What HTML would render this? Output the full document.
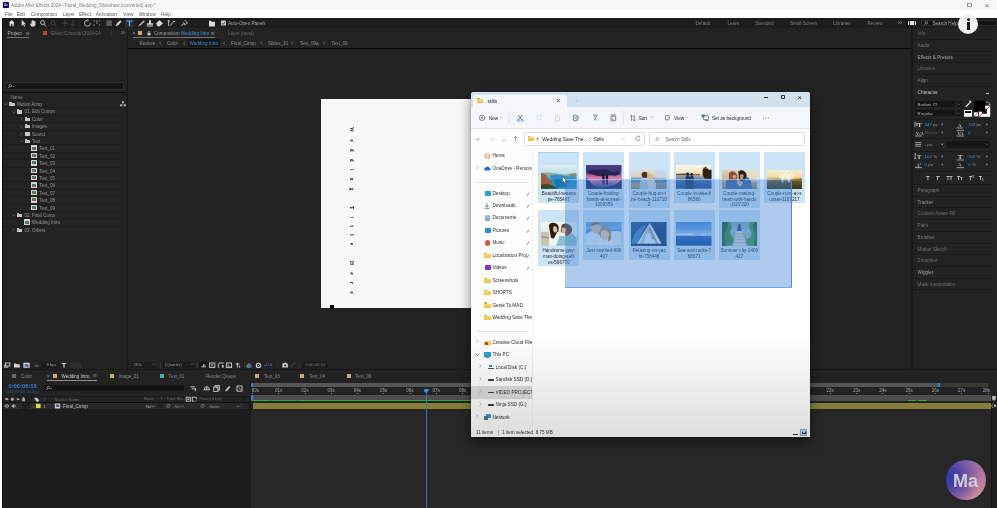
<!DOCTYPE html>
<html lang="en">
<head>
<meta charset="utf-8">
<title>Adobe After Effects 2024 - Floral_Wedding_Slideshow (converted).aep *</title>
<style>
html,body{margin:0;padding:0}
html{background:#181818}
body{width:997px;height:508px;overflow:hidden;position:relative;background:#181818;opacity:.9999;font-family:"Liberation Sans",sans-serif;color:#a8a8a8}
.a{position:absolute}
.t{position:absolute;white-space:nowrap;line-height:1;font-size:4.6px;color:#9a9a9a;margin-top:1.2px}
.d{color:#6a6a6a}
.b{color:#3f8fe6}
.pn{position:absolute;background:#232323}
.ln{position:absolute;background:#141414;height:1px}
svg{position:absolute;overflow:visible}
.cv,.cr,.cl{position:absolute;box-sizing:border-box;border-right:.55px solid #888;border-bottom:.55px solid #888}
.cv{transform:rotate(45deg)}.cr{transform:rotate(-45deg)}.cl{transform:rotate(135deg)}
/* project tree */
.fo{position:absolute;width:5.3px;height:3.3px;margin-top:.9px;background:#c9c9c9;border-radius:.5px}
.fo:before{content:"";position:absolute;left:0;top:-.8px;width:2.4px;height:1.2px;background:#c9c9c9;border-radius:.5px .5px 0 0}
.ci{position:absolute;width:6px;height:5.4px;background:#d6d6d6;border-radius:.6px}
.ci:before{content:"";position:absolute;left:1.2px;top:1.2px;width:3.6px;height:3px;background:linear-gradient(135deg,#2f6fc0 0 40%,#3a9a4a 40% 70%,#c0392b 70%)}
.ar{position:absolute;font-size:4px;color:#8a8a8a;line-height:1}
.rw{position:absolute;left:3px;width:117px;height:1px;background:#1d1d1d}
/* right panel */
.rp{position:absolute;left:913.4px;width:79.5px;height:1px;background:#1b1b1b}
.sq{position:absolute;width:4px;height:4px}
/* explorer */
.ex{font-family:"Liberation Sans",sans-serif;color:#1b1b1b}
.nv{position:absolute;left:493px;font-size:4.7px;line-height:1;white-space:nowrap;color:#222;overflow:hidden;max-width:39px;padding:2px 0 1px}
.ni{position:absolute;width:6px;height:5px;border-radius:.8px}
.pin{position:absolute;left:527px;font-size:3.6px;color:#777;line-height:1}
.tile{position:absolute;width:41px;background:#cce4f7}
.cap{position:absolute;left:0;width:41px;text-align:center;font-size:4.6px;line-height:5.9px;color:#2c2c2c;white-space:nowrap}
.th{position:absolute;left:3px;width:35.5px;overflow:hidden;filter:blur(.3px)}
</style>
</head>
<body>
<!-- ===== OS title bar + menu bar ===== -->
<div class="a" style="left:0;top:0;width:997px;height:9.5px;background:#f6f6f6"></div>
<div class="a" style="left:0;top:9.5px;width:997px;height:8.2px;background:#fefefe"></div>
<div class="a" style="left:3px;top:2.1px;width:6px;height:5.7px;background:#0d0a5c;border-radius:.8px"></div>
<div class="t" style="left:3.9px;top:2.6px;font-size:3.4px;color:#b9b4ff;font-weight:bold">Ae</div>
<div class="t" style="left:11px;top:3.1px;font-size:4.52px;color:#858585">Adobe After Effects 2024 - Floral_Wedding_Slideshow (converted).aep *</div>
<div class="t" style="left:5.0px;top:11.8px;font-size:4.75px;color:#5a5a5a">File</div><div class="t" style="left:16.8px;top:11.8px;font-size:4.75px;color:#5a5a5a">Edit</div><div class="t" style="left:30.7px;top:11.8px;font-size:4.75px;color:#5a5a5a">Composition</div><div class="t" style="left:62.8px;top:11.8px;font-size:4.75px;color:#5a5a5a">Layer</div><div class="t" style="left:78.9px;top:11.8px;font-size:4.75px;color:#5a5a5a">Effect</div><div class="t" style="left:95.7px;top:11.8px;font-size:4.75px;color:#5a5a5a">Animation</div><div class="t" style="left:123.3px;top:11.8px;font-size:4.75px;color:#5a5a5a">View</div><div class="t" style="left:138.7px;top:11.8px;font-size:4.75px;color:#5a5a5a">Window</div><div class="t" style="left:161.0px;top:11.8px;font-size:4.75px;color:#5a5a5a">Help</div>
<div class="a" style="left:967.4px;top:2.6px;width:4.4px;height:4.4px;border:.55px solid #9a9a9a;box-sizing:border-box"></div>
<div class="t" style="left:985px;top:1px;font-size:7px;color:#666">×</div>
<!-- ===== AE toolbar ===== -->
<div class="a" id="tb" style="left:0;top:17.7px;width:997px;height:10.3px;background:#1d1d1d"></div>
<svg style="left:0;top:17.7px" width="270" height="10.3" viewBox="0 0 270 10.3">
 <g fill="#d8d8d8" stroke="none">
  <path d="M11.7 2 L8.8 4.8 H9.6 V8.2 H11 V6.2 H12.4 V8.2 H13.8 V4.8 H14.6 Z"/>
  <path d="M21.600 1.800V8l1.500-1.400 1 2.200 1-.5-1-2.100h2z"/>
  <path d="M31.400 8.600L30 6.200q-.3-.9.600-.7l.800.8V3q.5-.7 1 0V2.200q.5-.7 1 0V3q.5-.7 1 0v.6q.5-.6 1 0V6.800q0 1.800-1.600 1.800z"/>
 </g>
 <circle cx="42.5" cy="4.6" r="2" fill="none" stroke="#d0d0d0" stroke-width=".9"/>
 <path d="M44 6.2 L46 8.4" stroke="#d0d0d0" stroke-width="1"/>
 <g stroke="#2f2f2f" stroke-width=".6"><path d="M19 1.5V9M49 1.5V9M80 1.5V9M104 1.5V9M136 1.5V9M166 1.5V9"/></g>
 <g stroke="#4a4a4a" fill="none" stroke-width=".9">
  <circle cx="53" cy="4.8" r="2"/><path d="M54.5 6.3 L56.3 8.3"/>
  <path d="M62 5.2H68M65 2.2V8.2"/>
  <path d="M73 2.2V8M71.3 6.3L73 8.2L74.7 6.3"/>
 </g>
 <g stroke="#bdbdbd" fill="none" stroke-width=".9">
  <path d="M90.5 5.2A3 3 0 1 1 87.5 2.2"/><path d="M87 1L88.6 2.3L87 3.6" stroke-width=".7"/>
 </g>
 <g fill="#8a8a8a"><rect x="93.5" y="2.5" width="1.3" height="1.3"/><rect x="96.2" y="2.5" width="1.3" height="1.3"/><rect x="98.9" y="2.5" width="1.3" height="1.3"/><rect x="93.5" y="6.5" width="1.3" height="1.3"/><rect x="96.2" y="4.5" width="1.3" height="1.3"/><rect x="98.9" y="6.5" width="1.3" height="1.3"/></g>
 <rect x="106.3" y="2.4" width="5.6" height="5.6" fill="#5e5e5e"/>
 <path d="M115.5 8.4 L117 5 L120.3 2.2 L121.6 3.6 L118.6 7 Z" fill="#cfcfcf"/>
 <rect x="125" y="0.8" width="9" height="9" fill="#2c2c2c"/>
 <path d="M126.6 2.4H132.4V3.7H130.2V8.3H128.8V3.7H126.6Z" fill="#4ea1ff"/>
 <path d="M138.3 8.4 L140 6 L144 2.2 L144.9 3.1 L141 7 Z" fill="#d6d6d6"/>
 <path d="M149 2.2h2v3h2.2v1.6h-6.4V5.2h2.2zM146.8 7.6h6.4v.9h-6.4z" fill="#d6d6d6"/>
 <path d="M156 5.6 L159.6 2 L163 5.4 L159.4 8.6 H157.6 Z" fill="#d6d6d6"/>
 <path d="M167.5 3h2.4M168.7 2v6M170.5 7.5L174 3l1 1.2" stroke="#cfcfcf" stroke-width=".9" fill="none"/>
 <path d="M184.6 2 L187.6 5 L186.2 5.4 L184.6 7 L183.4 5.8 L181.4 8 M183 4.2 L185.2 6.4" stroke="#cfcfcf" stroke-width=".9" fill="none"/>
 <path d="M209 2.8h2l.7.9h3.3v4.8h-6z" fill="#dcdcdc"/>
 <rect x="221" y="2.6" width="5" height="5" rx=".6" fill="#c9c9c9"/>
 <path d="M222 5.2l1.2 1.3 2-2.6" stroke="#222" stroke-width=".8" fill="none"/>
</svg>
<div class="t" style="left:228px;top:20.6px;font-size:4.6px;color:#a9a9a9">Auto-Open Panels</div>
<!-- workspace switcher -->
<div class="t" style="left:695.5px;top:20.6px;color:#808080">Default</div>
<div class="t" style="left:727.5px;top:20.6px;color:#808080">Learn</div>
<div class="t" style="left:755px;top:20.6px;color:#808080">Standard</div>
<div class="t" style="left:790px;top:20.6px;color:#808080">Small Screen</div>
<div class="t" style="left:833px;top:20.6px;color:#808080">Libraries</div>
<div class="t" style="left:867.5px;top:20.6px;color:#808080">Review</div>
<svg style="left:898.0px;top:21.0px" width="4.4" height="3.2" viewBox="0 0 4.4 3.2"><path d="M.3.2l1.400 1.400L.3 3M2.400.2l1.400 1.400L2.400 3" fill="none" stroke="#b4b4b4" stroke-width=".6"/></svg>
<div class="a" style="left:908.2px;top:21.2px;width:7.6px;height:3.7px;background:linear-gradient(90deg,#e0e0e0 0 12%,#444 12% 20%,#e0e0e0 20% 34%,#555 34% 42%,#e0e0e0 42% 58%,#666 58% 64%,#e0e0e0 64% 76%,#444 76% 84%,#e0e0e0 84%);border-radius:.4px"></div><div class="a" style="left:906.6px;top:19px;width:.6px;height:7.6px;background:#111"></div>
<div class="a" style="left:921px;top:20.1px;width:76px;height:5.7px;background:#131313;border:.5px solid #2c2c2c;box-sizing:border-box"></div>
<svg style="left:924.4px;top:20.6px" width="6.7" height="4.2" viewBox="0 0 8 5"><circle cx="2.8" cy="2" r="1.5" fill="none" stroke="#bdbdbd" stroke-width=".7"/><path d="M1.7 3.100L.4 4.600" stroke="#bdbdbd" stroke-width=".8"/></svg>
<div class="t" style="left:932.5px;top:20.6px;color:#b5b5b5">Search Help</div>
<!-- ===== Project panel ===== -->
<div class="pn" style="left:2.7px;top:28px;width:124.5px;height:341px"></div>
<div class="t" style="left:7.6px;top:30.9px;color:#b8b8b8">Project</div>
<svg style="left:25.6px;top:32.0px" width="3.4" height="3.2" viewBox="0 0 3.4 3.2"><path d="M0 .4h3.400M0 1.600h3.400M0 2.800h3.400" stroke="#a4a4a4" stroke-width=".45"/></svg>
<div class="a" style="left:7px;top:36.9px;width:22px;height:.7px;background:#707070"></div>
<div class="sq" style="left:43px;top:31.2px;width:3.8px;height:3.6px;background:#d03a3a"></div>
<div class="t d" style="left:51px;top:30.9px">Effect Controls (2024-04</div>
<svg style="left:120.8px;top:31.4px" width="4.4" height="3.2" viewBox="0 0 4.4 3.2"><path d="M.3.2l1.400 1.400L.3 3M2.400.2l1.400 1.400L2.400 3" fill="none" stroke="#b4b4b4" stroke-width=".6"/></svg>
<div class="a" style="left:5px;top:82.4px;width:119px;height:7.6px;background:#161616;border:.5px solid #2e2e2e;box-sizing:border-box"></div>
<svg style="left:8.0px;top:84.4px" width="6.7" height="4.2" viewBox="0 0 8 5"><circle cx="2.8" cy="2" r="1.5" fill="none" stroke="#c4c4c4" stroke-width=".7"/><path d="M1.7 3.100L.4 4.600" stroke="#c4c4c4" stroke-width=".8"/><path d="M5.200 2.600h2l-1 1.200z" fill="#c4c4c4"/></svg>
<div class="ln" style="left:2.7px;top:92px;width:123.6px;background:#0e0e0e"></div>
<div class="t d" style="left:10.5px;top:94.4px;color:#8a8a8a">Name</div>
<div class="a" style="left:120.5px;top:100.5px;width:6.7px;height:133px;background:#212121"></div>
<svg style="left:120px;top:101px" width="6" height="6" viewBox="0 0 6 6"><g fill="#c8c8c8"><rect x="2" y=".3" width="2" height="2"/><rect x=".3" y="3.3" width="2" height="2"/><rect x="3.7" y="3.3" width="2" height="2"/></g></svg>
<!-- project tree -->
<div class="rw" style="top:107.3px"></div>
<svg style="left:4.43px;top:103.45px" width="4.04" height="2.52" viewBox="0 0 4.04 2.52"><path d="M0.50 0.50L2.02 2.02L3.54 0.50" fill="none" stroke="#6c6c6c" stroke-width=".6"/></svg>
<div class="fo" style="left:9.3px;top:102.0px"></div>
<div class="t" style="left:17.0px;top:101.9px;color:#969696;font-size:4.5px">Motion Array</div>
<div class="rw" style="top:114.7px"></div>
<svg style="left:12.02px;top:110.84px" width="4.04" height="2.52" viewBox="0 0 4.04 2.52"><path d="M0.50 0.50L2.02 2.02L3.54 0.50" fill="none" stroke="#6c6c6c" stroke-width=".6"/></svg>
<div class="fo" style="left:16.9px;top:109.4px"></div>
<div class="t" style="left:24.5px;top:109.3px;color:#969696;font-size:4.5px">01. Edit Comps</div>
<div class="rw" style="top:122.1px"></div>
<svg style="left:20.04px;top:117.28px" width="2.47" height="3.94" viewBox="0 0 2.47 3.94"><path d="M0.50 0.50L1.97 1.97L0.50 3.44" fill="none" stroke="#6c6c6c" stroke-width=".6"/></svg>
<div class="fo" style="left:24.5px;top:116.8px"></div>
<div class="t" style="left:32.0px;top:116.7px;color:#969696;font-size:4.5px">Color</div>
<div class="rw" style="top:129.5px"></div>
<svg style="left:20.04px;top:124.68px" width="2.47" height="3.94" viewBox="0 0 2.47 3.94"><path d="M0.50 0.50L1.97 1.97L0.50 3.44" fill="none" stroke="#6c6c6c" stroke-width=".6"/></svg>
<div class="fo" style="left:24.5px;top:124.2px"></div>
<div class="t" style="left:32.0px;top:124.1px;color:#969696;font-size:4.5px">Images</div>
<div class="rw" style="top:136.9px"></div>
<svg style="left:20.04px;top:132.08px" width="2.47" height="3.94" viewBox="0 0 2.47 3.94"><path d="M0.50 0.50L1.97 1.97L0.50 3.44" fill="none" stroke="#6c6c6c" stroke-width=".6"/></svg>
<div class="fo" style="left:24.5px;top:131.6px"></div>
<div class="t" style="left:32.0px;top:131.5px;color:#969696;font-size:4.5px">Sound</div>
<div class="rw" style="top:144.3px"></div>
<svg style="left:19.63px;top:140.45px" width="4.04" height="2.52" viewBox="0 0 4.04 2.52"><path d="M0.50 0.50L2.02 2.02L3.54 0.50" fill="none" stroke="#6c6c6c" stroke-width=".6"/></svg>
<div class="fo" style="left:24.5px;top:139.0px"></div>
<div class="t" style="left:32.0px;top:138.9px;color:#969696;font-size:4.5px">Text</div>
<div class="rw" style="top:151.7px"></div>
<div class="ci" style="left:31.2px;top:145.4px"></div>
<div class="t" style="left:39.3px;top:146.3px;color:#969696;font-size:4.5px">Text_01</div>
<div class="rw" style="top:159.1px"></div>
<div class="ci" style="left:31.2px;top:152.8px"></div>
<div class="t" style="left:39.3px;top:153.7px;color:#969696;font-size:4.5px">Text_02</div>
<div class="rw" style="top:166.5px"></div>
<div class="ci" style="left:31.2px;top:160.2px"></div>
<div class="t" style="left:39.3px;top:161.1px;color:#969696;font-size:4.5px">Text_03</div>
<div class="rw" style="top:173.9px"></div>
<div class="ci" style="left:31.2px;top:167.6px"></div>
<div class="t" style="left:39.3px;top:168.5px;color:#969696;font-size:4.5px">Text_04</div>
<div class="rw" style="top:181.3px"></div>
<div class="ci" style="left:31.2px;top:175.0px"></div>
<div class="t" style="left:39.3px;top:175.9px;color:#969696;font-size:4.5px">Text_05</div>
<div class="rw" style="top:188.7px"></div>
<div class="ci" style="left:31.2px;top:182.4px"></div>
<div class="t" style="left:39.3px;top:183.3px;color:#969696;font-size:4.5px">Text_06</div>
<div class="rw" style="top:196.1px"></div>
<div class="ci" style="left:31.2px;top:189.8px"></div>
<div class="t" style="left:39.3px;top:190.7px;color:#969696;font-size:4.5px">Text_07</div>
<div class="rw" style="top:203.5px"></div>
<div class="ci" style="left:31.2px;top:197.2px"></div>
<div class="t" style="left:39.3px;top:198.1px;color:#969696;font-size:4.5px">Text_08</div>
<div class="rw" style="top:210.9px"></div>
<div class="ci" style="left:31.2px;top:204.6px"></div>
<div class="t" style="left:39.3px;top:205.5px;color:#969696;font-size:4.5px">Text_09</div>
<div class="rw" style="top:218.3px"></div>
<svg style="left:12.02px;top:214.45px" width="4.04" height="2.52" viewBox="0 0 4.04 2.52"><path d="M0.50 0.50L2.02 2.02L3.54 0.50" fill="none" stroke="#6c6c6c" stroke-width=".6"/></svg>
<div class="fo" style="left:16.9px;top:213.0px"></div>
<div class="t" style="left:24.5px;top:212.9px;color:#969696;font-size:4.5px">02. Final Comp</div>
<div class="rw" style="top:225.7px"></div>
<div class="ci" style="left:24.3px;top:219.4px"></div>
<div class="t" style="left:32.0px;top:220.3px;color:#969696;font-size:4.5px">Wedding Intro</div>
<div class="rw" style="top:233.1px"></div>
<svg style="left:12.45px;top:228.28px" width="2.47" height="3.94" viewBox="0 0 2.47 3.94"><path d="M0.50 0.50L1.97 1.97L0.50 3.44" fill="none" stroke="#6c6c6c" stroke-width=".6"/></svg>
<div class="fo" style="left:16.9px;top:227.8px"></div>
<div class="t" style="left:24.5px;top:227.7px;color:#969696;font-size:4.5px">03. Others</div>
<!-- project bottom bar -->
<svg style="left:3px;top:361px" width="90" height="8" viewBox="0 0 90 8">
 <g fill="none" stroke="#cfcfcf" stroke-width=".9"><rect x="2.4" y="2" width="4.4" height="3"/><path d="M1.3 3.6v2.6h4"/></g>
 <path d="M11 2.4h2l.6.8h3.2v3.4H11z" fill="#d6d6d6"/>
 <rect x="20.4" y="1.8" width="6.2" height="5" rx=".5" fill="#d6d6d6"/><rect x="21.6" y="3" width="3.8" height="2.8" fill="#3a7bd0"/><rect x="23.4" y="4.2" width="2" height="1.6" fill="#c0392b"/>
 <path d="M31 5.8l1.8-3 1 1.6 1-.9 1.2 2.3z" fill="#5a5a5a"/>
 <rect x="39.2" y="1.4" width="17" height="5.8" fill="#1b1b1b"/>
 <path d="M58.8 2h4.4v1h-1.6v3.6h-1.2V3h-1.6z" fill="#cfcfcf"/>
 <rect x="67" y="1.2" width="12" height="6" rx="3" fill="#2e2e2e"/>
</svg>
<div class="t" style="left:46.5px;top:362px;font-size:4.2px;color:#9c9c9c">8 bpc</div>
<div class="a" style="left:111.3px;top:29.6px;width:.6px;height:7.4px;background:#303030"></div>
<!-- ===== Composition panel ===== -->
<div class="pn" style="left:128.2px;top:28px;width:783.1px;height:341px"></div>
<div class="ln" style="left:128.2px;top:47.7px;width:783.1px;background:#080808"></div>
<div class="t" style="left:132.6px;top:30.6px;font-size:4.6px;color:#a0a0a0">×</div>
<div class="sq" style="left:138.4px;top:31px;background:#c9ad78"></div>
<svg style="left:146.6px;top:30.8px" width="4" height="4.8" viewBox="0 0 5 6"><path d="M1.2 2.6V1.8a1.3 1.3 0 0 1 2.6 0v.8" fill="none" stroke="#d0d0d0" stroke-width=".8"/><rect x=".6" y="2.6" width="3.8" height="2.8" fill="#d0d0d0"/></svg>
<div class="t" style="left:154px;top:30.9px;color:#9c9c9c">Composition <span class="b">Wedding Intro</span></div>
<svg style="left:211.0px;top:32.0px" width="3.4" height="3.2" viewBox="0 0 3.4 3.2"><path d="M0 .4h3.400M0 1.600h3.400M0 2.800h3.400" stroke="#a4a4a4" stroke-width=".45"/></svg>
<div class="a" style="left:132.5px;top:36.9px;width:82.5px;height:.7px;background:#707070"></div>
<div class="t d" style="left:228px;top:30.9px">Layer (none)</div>
<div class="t" style="left:139.5px;top:40.9px;color:#8e8e8e">Reduce</div>
<svg style="left:158.72px;top:41.02px" width="2.73" height="4.46" viewBox="0 0 2.73 4.46"><path d="M2.23 0.50L0.50 2.23L2.23 3.96" fill="none" stroke="#8a8a8a" stroke-width=".6"/></svg>
<div class="t" style="left:167px;top:40.9px;color:#8e8e8e">Color</div>
<svg style="left:183.22px;top:41.02px" width="2.73" height="4.46" viewBox="0 0 2.73 4.46"><path d="M2.23 0.50L0.50 2.23L2.23 3.96" fill="none" stroke="#8a8a8a" stroke-width=".6"/></svg>
<div class="a" style="left:187.5px;top:39.4px;width:32px;height:7.4px;background:#161616"></div>
<div class="t b" style="left:189.5px;top:40.9px">Wedding Intro</div>
<svg style="left:222.72px;top:41.02px" width="2.73" height="4.46" viewBox="0 0 2.73 4.46"><path d="M2.23 0.50L0.50 2.23L2.23 3.96" fill="none" stroke="#8a8a8a" stroke-width=".6"/></svg>
<div class="t" style="left:231px;top:40.9px;color:#8e8e8e">Final_Comp</div>
<svg style="left:259.71px;top:41.02px" width="2.73" height="4.46" viewBox="0 0 2.73 4.46"><path d="M2.23 0.50L0.50 2.23L2.23 3.96" fill="none" stroke="#8a8a8a" stroke-width=".6"/></svg>
<div class="t" style="left:268px;top:40.9px;color:#8e8e8e">Slides_10</div>
<svg style="left:291.21px;top:41.02px" width="2.73" height="4.46" viewBox="0 0 2.73 4.46"><path d="M2.23 0.50L0.50 2.23L2.23 3.96" fill="none" stroke="#8a8a8a" stroke-width=".6"/></svg>
<div class="t" style="left:300px;top:40.9px;color:#8e8e8e">Text_09a</div>
<svg style="left:323.21px;top:41.02px" width="2.73" height="4.46" viewBox="0 0 2.73 4.46"><path d="M2.23 0.50L0.50 2.23L2.23 3.96" fill="none" stroke="#8a8a8a" stroke-width=".6"/></svg>
<div class="t" style="left:331.5px;top:40.9px;color:#8e8e8e">Text_09</div>
<!-- comp canvas -->
<div class="a" style="left:320.8px;top:99.2px;width:372px;height:209px;background:#f8f8f8"></div>
<div class="a" style="left:330.3px;top:304.9px;width:3.7px;height:4px;background:#0a0a0a"></div>
<div class="a" id="vt" style="left:348.8px;top:127.3px;writing-mode:vertical-rl;font-family:'Liberation Serif',serif;font-size:5.2px;line-height:5.4px;letter-spacing:7.23px;color:#161616;white-space:nowrap;font-weight:bold">Wedding Title Here</div>
<!-- comp bottom bar -->
<div class="a" style="left:131px;top:361.8px;width:25px;height:5.8px;background:#1b1b1b"></div>
<div class="t" style="left:133.5px;top:362px;font-size:4.2px;color:#9c9c9c">25%</div>
<svg style="left:151.56px;top:363.20px" width="3.69" height="2.34" viewBox="0 0 3.69 2.34"><path d="M0.50 0.50L1.84 1.84L3.19 0.50" fill="none" stroke="#8a8a8a" stroke-width=".6"/></svg>
<div class="a" style="left:163px;top:361.8px;width:31px;height:5.8px;background:#1b1b1b"></div>
<div class="t" style="left:165px;top:362px;font-size:4.2px;color:#9c9c9c">(Quarter)</div>
<svg style="left:189.96px;top:363.20px" width="3.69" height="2.34" viewBox="0 0 3.69 2.34"><path d="M0.50 0.50L1.84 1.84L3.19 0.50" fill="none" stroke="#8a8a8a" stroke-width=".6"/></svg>
<svg style="left:198px;top:361px" width="135" height="8" viewBox="0 0 135 8">
 <g fill="none" stroke="#d0d0d0" stroke-width=".9">
  <rect x="1.4" y=".8" width="8" height="6.6" fill="#111" stroke="none"/><path d="M3.2 5.8h4.8M5.6 5.8V3.2l1.6 1.6"/>
  <rect x="11.6" y="2" width="5.2" height="4.4"/><path d="M13 3.2l2.4 2M15.4 3.2l-2.4 2" stroke-width=".6"/>
  <path d="M20.4 6.8V3.4q0-1.4 1.6-1.4h3.6"/><rect x="24" y="4" width="1.6" height="2.6" fill="#d0d0d0" stroke="none"/>
  <rect x="28.6" y="2" width="5" height="4.6"/><path d="M30 3.4v2h2.4" stroke-width=".6"/>
  <path d="M39.4 1.6v5M37.6 3h3.8M41.6 4.6v2.2" />
 </g>
 <circle cx="51" cy="3.6" r="1.7" fill="#d33"/><circle cx="50" cy="5.2" r="1.7" fill="#3a3"/><circle cx="52.2" cy="5.2" r="1.7" fill="#36c"/>
 <circle cx="60.4" cy="4.4" r="2.1" fill="none" stroke="#d6d6d6" stroke-width="1.1"/><circle cx="60.4" cy="4.4" r=".7" fill="#d6d6d6"/>
 <path d="M80 1.4v5.6M101.4 1.4v5.6" stroke="#3a3a3a" stroke-width=".6"/>
 <path d="M84.4 2.6h1.2l.5-.8h2l.5.8h1.2v3.8h-5.4z" fill="#d0d0d0"/><circle cx="87.1" cy="4.5" r="1" fill="#222"/>
 <path d="M93.6 5.6l2.4-2.4M95 2.8l1-1q1-.6 1.6.4l-1 1.4M94.4 6.4q-1 .6-1.6-.4l1-1.4" stroke="#4a4a4a" stroke-width=".8" fill="none"/>
 <rect x="104.6" y="1.2" width="25.4" height="5.8" fill="#1d1d1d"/>
</svg>
<div class="a" style="left:159.8px;top:361.6px;width:.6px;height:6px;background:#363636"></div><div class="a" style="left:197.0px;top:361.6px;width:.6px;height:6px;background:#363636"></div><div class="a" style="left:243.6px;top:361.6px;width:.6px;height:6px;background:#363636"></div>
<div class="t b" style="left:263.8px;top:362px;font-size:4.2px">+0.0</div>
<div class="t d" style="left:305.5px;top:362px;font-size:4.2px;color:#777">0:00:06:15</div>
<!-- ===== Right panel stack ===== -->
<div class="pn" style="left:912.8px;top:28px;width:84.2px;height:341px"></div>
<div class="t d" style="left:917.6px;top:30.9px;color:#6e6e6e">Info</div>
<div class="rp" style="top:39px"></div>
<div class="t d" style="left:917.6px;top:42.9px;color:#7c7c7c">Audio</div>
<div class="rp" style="top:50.8px"></div>
<div class="t" style="left:917.6px;top:54.6px;color:#a6a6a6">Effects &amp; Presets</div>
<div class="rp" style="top:62.4px"></div>
<div class="t d" style="left:917.6px;top:66.1px;color:#6a6a6a">Libraries</div>
<div class="rp" style="top:74px"></div>
<div class="t d" style="left:917.6px;top:77.6px;color:#7c7c7c">Align</div>
<div class="rp" style="top:85.7px"></div>
<div class="t" style="left:917.6px;top:89.6px;color:#c4c4c4">Character</div>
<div class="a" style="left:985.5px;top:93.2px;width:3.2px;height:.8px;background:#c8c8c8"></div>
<!-- character panel -->
<div class="a" style="left:915.3px;top:101px;width:40px;height:6.4px;background:#151515"></div>
<div class="t" style="left:917.6px;top:102.1px;color:#b0b0b0;font-size:4.4px">Bodoni 72</div>
<div class="a" style="left:956.6px;top:101px;width:5.4px;height:6.4px;background:#151515"></div>
<svg style="left:957.26px;top:103.00px" width="3.69" height="2.34" viewBox="0 0 3.69 2.34"><path d="M0.50 0.50L1.84 1.84L3.19 0.50" fill="none" stroke="#7c7c7c" stroke-width=".6"/></svg>
<div class="a" style="left:915.3px;top:109.8px;width:40px;height:6.4px;background:#151515"></div>
<div class="t" style="left:917.6px;top:110.9px;color:#b0b0b0;font-size:4.4px">Regular</div>
<div class="a" style="left:956.6px;top:109.8px;width:5.4px;height:6.4px;background:#151515"></div>
<svg style="left:957.26px;top:111.80px" width="3.69" height="2.34" viewBox="0 0 3.69 2.34"><path d="M0.50 0.50L1.84 1.84L3.19 0.50" fill="none" stroke="#7c7c7c" stroke-width=".6"/></svg>
<svg style="left:963px;top:99px" width="30" height="20" viewBox="0 0 30 20">
 <path d="M2.300 8.300l.5-1.500 3.300-3.300 1 1-3.300 3.300z" fill="#d4d4d4"/><path d="M6 2.800l1.400 1.400.8-.8q.4-.9-.3-1.500t-1.400-.1z" fill="#e4e4e4"/>
 <rect x="1.100" y="11" width="8" height="6.800" fill="#f4f4f4"/><rect x="2" y="12.100" width="6.200" height="1.900" fill="#0a0a0a"/>
 <rect x="15.900" y="6.700" width="11.300" height="11.100" fill="#fdfdfd"/>
 <rect x="19" y="9.800" width="4.900" height="4.900" fill="#0c0c0c"/>
 <path d="M15.900 17.800L27.200 6.700" stroke="#a8121f" stroke-width=".85"/>
 <rect x="10.900" y="1.700" width="11.300" height="10.900" fill="#000"/>
 <path d="M23.200 3.200h2q1.400 0 1.400 1.400v1.200M25.700 5l.9 1 .9-1" stroke="#d8d8d8" stroke-width=".6" fill="none"/>
 <rect x="10.900" y="13.300" width="4.200" height="4" fill="#f4f4f4"/><path d="M11 17.200l4-3.800" stroke="#b8202c" stroke-width=".55"/>
</svg>
<div class="rp" style="top:118.9px"></div>
<svg style="left:914px;top:120px" width="78" height="62" viewBox="0 0 78 62">
 <g fill="#cfcfcf" font-family="Liberation Serif,serif" font-weight="bold">
  <text x="1.6" y="6.4" font-size="4.4">T</text><text x="3.6" y="6.6" font-size="6.4">T</text>
  <text x="44" y="7" font-size="4.6" fill="#bdbdbd">A</text>
  <text x="2" y="15" font-size="4.4" fill="#bdbdbd">V/A</text>
  <text x="43.6" y="15" font-size="4.4" fill="#bdbdbd">VA</text>
  <text x="3" y="38.6" font-size="6.4">T</text>
  <text x="44" y="38.8" font-size="6.6">T</text>
  <text x="2.6" y="46.8" font-size="4.4" fill="#bdbdbd">Aª</text>
  <text x="44" y="46.4" font-size="4.4" fill="#bdbdbd">A</text>
 </g>
 <g stroke="#cfcfcf" stroke-width=".7" fill="none">
  <path d="M1 1.600v5.600M42.600 8h6.400"/>
  <path d="M1 16h7M42.6 16h7.4M42.6 10.6h7.4"/>
  <path d="M1.2 33.4v5.6M.4 34.2l.8-.8.8.8M.4 38.2l.8.8.8-.8"/>
  <path d="M42.6 40h7.4"/>
  <path d="M1 47.6h7M42.6 47.6h7.4"/>
  <path d="M1.2 22.6h6M1.2 24.4h6M1.2 26.2h6"/>
 </g>
 <g fill="#9a9a9a" font-size="3">
  <path d="M27.0 3.8h2.400l-1.200 1.600z"/><path d="M71.6 3.8h2.400l-1.200 1.600z"/><path d="M27.0 11.8h2.400l-1.200 1.600z"/><path d="M71.6 11.8h2.400l-1.200 1.600z"/>
  <path d="M27.0 23.8h2.400l-1.200 1.600z"/><path d="M27.0 35.8h2.400l-1.200 1.600z"/><path d="M71.6 35.8h2.400l-1.200 1.600z"/><path d="M27.0 43.8h2.400l-1.200 1.600z"/><path d="M71.6 43.8h2.400l-1.200 1.600z"/>
 </g>
 <g fill="#d4d4d4" font-family="Liberation Sans,sans-serif" font-weight="bold" font-size="5.4">
  <text x="12.2" y="60">T</text><text x="22" y="60" font-style="italic">T</text><text x="32.4" y="60" font-size="5">TT</text><text x="43" y="60">T<tspan font-size="4">T</tspan></text><text x="55" y="60">T<tspan font-size="3" dy="-2">1</tspan></text><text x="64.8" y="60">T<tspan font-size="3" dy="1">1</tspan></text>
 </g>
</svg>
<div class="t b" style="left:924.6px;top:121.4px;font-size:4.4px">347 <span style="color:#9a9a9a">px</span></div>
<div class="t b" style="left:968px;top:121.4px;font-size:4.4px">159 <span style="color:#9a9a9a">px</span></div>
<div class="t d" style="left:924.6px;top:129.6px;font-size:4.2px;color:#5e5e5e">Metrics</div>
<div class="t b" style="left:968px;top:129.6px;font-size:4.4px">0</div>
<div class="rp" style="top:137.6px"></div>
<div class="t b" style="left:924.6px;top:141.8px;font-size:4.4px">- <span style="color:#9a9a9a">px</span></div>
<div class="a" style="left:946.7px;top:141.4px;width:43.5px;height:6.4px;background:#161616"></div>
<svg style="left:984.96px;top:143.40px" width="3.69" height="2.34" viewBox="0 0 3.69 2.34"><path d="M0.50 0.50L1.84 1.84L3.19 0.50" fill="none" stroke="#7c7c7c" stroke-width=".6"/></svg>
<div class="rp" style="top:151px"></div>
<div class="t b" style="left:924.6px;top:153.6px;font-size:4.4px">100 <span style="color:#9a9a9a">%</span></div>
<div class="t b" style="left:968px;top:153.6px;font-size:4.4px">100 <span style="color:#9a9a9a">%</span></div>
<div class="t b" style="left:924.6px;top:161.4px;font-size:4.4px">0 <span style="color:#9a9a9a">px</span></div>
<div class="t b" style="left:968px;top:161.4px;font-size:4.4px">0 <span style="color:#9a9a9a">%</span></div>
<div class="rp" style="top:171.4px"></div>
<div class="rp" style="top:184.4px"></div>
<div class="t d" style="left:917.6px;top:187.9px;color:#7a7a7a">Paragraph</div>
<div class="rp" style="top:196px"></div>
<div class="t" style="left:917.6px;top:199.6px;color:#9a9a9a">Tracker</div>
<div class="rp" style="top:207.4px"></div>
<div class="t d" style="left:917.6px;top:211.2px;color:#707070">Content-Aware Fill</div>
<div class="rp" style="top:219.2px"></div>
<div class="t d" style="left:917.6px;top:223px;color:#707070">Paint</div>
<div class="rp" style="top:230.9px"></div>
<div class="t d" style="left:917.6px;top:234.7px;color:#808080">Brushes</div>
<div class="rp" style="top:242.6px"></div>
<div class="t d" style="left:917.6px;top:246.4px;color:#707070">Motion Sketch</div>
<div class="rp" style="top:254.3px"></div>
<div class="t d" style="left:917.6px;top:258.1px;color:#707070">Smoother</div>
<div class="rp" style="top:266px"></div>
<div class="t" style="left:917.6px;top:269.8px;color:#a8a8a8">Wiggler</div>
<div class="rp" style="top:277.7px"></div>
<div class="t d" style="left:917.6px;top:281.5px;color:#707070">Mask Interpolation</div>
<div class="rp" style="top:289.4px"></div>
<!-- ===== Timeline panel ===== -->
<div class="pn" style="left:3px;top:370px;width:994px;height:138px"></div><div class="a" style="left:3px;top:409.6px;width:247px;height:98.4px;background:#1d1d1d"></div><div class="a" style="left:251px;top:409.6px;width:740px;height:98.4px;background:#272727"></div><div class="a" style="left:990.8px;top:402px;width:6.2px;height:106px;background:#1f1f1f"></div><div class="a" style="left:990.8px;top:402px;width:.8px;height:106px;background:#171717"></div>
<div class="sq" style="left:12.2px;top:373.8px;background:#6c6c6c"></div>
<div class="t d" style="left:21px;top:373.9px;color:#8a8a8a">Color</div>
<div class="t" style="left:47px;top:373.7px;color:#a0a0a0">×</div>
<div class="sq" style="left:52.8px;top:373.8px;background:#c9ad78"></div>
<div class="t" style="left:61.6px;top:373.9px;color:#d2d2d2;font-size:4.5px">Wedding Intro</div>
<svg style="left:93.4px;top:374.4px" width="3.4" height="3.2" viewBox="0 0 3.4 3.2"><path d="M0 .4h3.400M0 1.600h3.400M0 2.800h3.400" stroke="#a4a4a4" stroke-width=".45"/></svg>
<div class="a" style="left:47.4px;top:380px;width:49.6px;height:.7px;background:#8e8e8e"></div>
<div class="sq" style="left:110.4px;top:373.8px;background:#c9ad78"></div>
<div class="t d" style="left:118.5px;top:373.9px;color:#8a8a8a">Image_01</div>
<div class="sq" style="left:159.5px;top:373.8px;background:#2fb3b3"></div>
<div class="t d" style="left:168.3px;top:373.9px;color:#8a8a8a">Text_01</div>
<div class="t d" style="left:206px;top:373.9px;color:#8a8a8a">Render Queue</div>
<div class="sq" style="left:255px;top:373.8px;background:#c9ad78"></div>
<div class="t d" style="left:263.8px;top:373.9px;color:#8a8a8a">Text_03</div>
<div class="sq" style="left:300.2px;top:373.8px;background:#c9ad78"></div>
<div class="t d" style="left:309px;top:373.9px;color:#8a8a8a">Text_04</div>
<div class="sq" style="left:346.6px;top:373.8px;background:#c9ad78"></div>
<div class="t d" style="left:355.3px;top:373.9px;color:#8a8a8a">Text_09</div>
<!-- timecode + search -->
<div class="t b" style="left:8.4px;top:382.6px;font-size:5.8px;font-weight:bold;color:#2f86e8">0:00:06:15</div>
<div class="t" style="left:6.6px;top:388.4px;font-size:4.2px;color:#2a5a9a">00159 (24.00 fps)</div>
<div class="a" style="left:44px;top:385px;width:140px;height:5.8px;background:#151515"></div>
<svg style="left:46.4px;top:385.8px" width="6.7" height="4.2" viewBox="0 0 8 5"><circle cx="2.8" cy="2" r="1.5" fill="none" stroke="#c4c4c4" stroke-width=".7"/><path d="M1.7 3.100L.4 4.600" stroke="#c4c4c4" stroke-width=".8"/><path d="M5.200 2.600h2l-1 1.200z" fill="#c4c4c4"/></svg>
<svg style="left:188px;top:383.6px" width="58" height="9" viewBox="0 0 58 9">
 <g fill="none" stroke="#d0d0d0" stroke-width=".9">
  <path d="M2.4 2.8h4.4M3.6 4.8h4.8M7.4 4.8v2.4"/>
  <path d="M15.4 5.8h6.6M16.4 5.6q0-3 2.4-3t2.4 3M18.8 2.6v3"/>
  <rect x="27.2" y="1.6" width="4.2" height="4.4"/><rect x="25.8" y="3" width="4.2" height="4.4" fill="#232323"/><rect x="28.4" y="2.8" width="1.6" height="1.6" fill="#d0d0d0" stroke="none"/>
  <path d="M37 6.4l3.4-3.8q1.4-.8 2 .6l-3.4 3.8q-1.4.8-2-.6z" fill="#bdbdbd" stroke="none"/>
  <rect x="49" y="2" width="5" height="5.2"/><path d="M50.4 3.4l2.6 2.8" stroke-width=".7"/>
 </g>
</svg>
<!-- column header row -->
<div class="ln" style="left:2.7px;top:395.6px;width:247.6px;background:#1b1b1b"></div>
<svg style="left:3px;top:396px" width="245" height="6.4" viewBox="0 0 245 6.4">
 <g fill="#a8a8a8">
  <ellipse cx="3.6" cy="3.2" rx="1.8" ry="1.1"/><circle cx="9.2" cy="3.2" r="1.6"/><rect x="13.6" y="2.4" width="2.6" height="1.6"/>
  <path d="M19.4 2.8v-.8a1 1 0 0 1 2 0v.8h.5v2.4h-3V2.8z"/>
  <path d="M31.2 1.8h2.6l2.4 2.4-2 2-2.4-2.4z" fill="#c8c8c8"/>
  <rect x="183.2" y="1.2" width="4.6" height="4" fill="none" stroke="#d0d0d0" stroke-width=".8"/><rect x="184.6" y="2.4" width="1.8" height="1.6" fill="#d0d0d0"/>
  <rect x="189.4" y="1.2" width="4" height="4" fill="none" stroke="#d0d0d0" stroke-width=".8"/><rect x="191.4" y="3.2" width="2.4" height="2.4" fill="#232323"/>
 </g>
 <path d="M147.5 1v4.6M240.6 1v4.6" stroke="#111" stroke-width=".7"/>
</svg>
<div class="t d" style="left:43.2px;top:396.6px;font-size:4px;color:#8a8a8a">#</div>
<div class="t d" style="left:54.8px;top:396.6px;font-size:4px;color:#6c6c6c">Source Name</div>
<div class="t d" style="left:144px;top:396.6px;font-size:3.8px;color:#6c6c6c">Mode</div>
<div class="t d" style="left:160.5px;top:396.6px;font-size:3.8px;color:#6c6c6c">T</div>
<div class="t d" style="left:166.3px;top:396.6px;font-size:3.8px;color:#6c6c6c">Track Ma...</div>
<div class="t d" style="left:199.5px;top:396.6px;font-size:3.8px;color:#6c6c6c">Parent &amp; Link</div>
<div class="ln" style="left:2.7px;top:402px;width:247.6px;background:#111"></div>
<!-- layer row -->
<div class="a" style="left:2.7px;top:403px;width:241px;height:6px;background:#2a2a2a"></div>
<div class="a" style="left:21.7px;top:403px;width:8.2px;height:6px;background:#1f1f1f"></div>
<svg style="left:3px;top:403px" width="245" height="6" viewBox="0 0 245 6">
 <ellipse cx="3.8" cy="3" rx="2" ry="1.3" fill="none" stroke="#c8c8c8" stroke-width=".7"/><circle cx="3.8" cy="3" r=".6" fill="#c8c8c8"/>
 <path d="M9 2.2h1l1.2-1v3.6l-1.2-1H9zM12 2q.8 1 0 2" fill="#c0c0c0" stroke="#c0c0c0" stroke-width=".4"/>
 <rect x="32.9" y=".7" width="4.7" height="4.4" fill="#e4d44c"/>
 <rect x="51.8" y=".4" width="5.4" height="5" rx=".6" fill="#cfcfcf"/><rect x="52.8" y="1.4" width="3.4" height="2.6" fill="#2f6fc0"/><rect x="54.2" y="2.4" width="2" height="1.6" fill="#b9382c"/>
 <rect x="155" y=".6" width="5" height="4.8" fill="#1f1f1f"/>
 <circle cx="165.2" cy="3" r="1.6" fill="none" stroke="#8a8a8a" stroke-width=".6"/><path d="M165.2 3l1.8-1.6" stroke="#8a8a8a" stroke-width=".5"/>
 <circle cx="199.4" cy="3" r="1.6" fill="none" stroke="#8a8a8a" stroke-width=".6"/><path d="M199.4 3l1.8-1.6" stroke="#8a8a8a" stroke-width=".5"/>
</svg>
<svg style="left:32.00px;top:404.50px" width="2.36" height="3.71" viewBox="0 0 2.36 3.71"><path d="M0.50 0.50L1.86 1.86L0.50 3.21" fill="none" stroke="#8a8a8a" stroke-width=".6"/></svg>
<div class="t" style="left:43.6px;top:403.4px;font-size:4.4px;color:#b8b8b8">1</div>
<div class="t" style="left:63px;top:403.4px;font-size:4.6px;color:#c0c0c0;letter-spacing:0">Final_Comp</div>
<div class="t" style="left:146px;top:403.4px;font-size:4.2px;color:#b0b0b0">No</div><svg style="left:151.35px;top:405.40px" width="4.31" height="2.65" viewBox="0 0 4.31 2.65"><path d="M0.50 0.50L2.15 2.15L3.81 0.50" fill="none" stroke="#9a9a9a" stroke-width=".6"/></svg>
<div class="t" style="left:174.4px;top:403.4px;font-size:4.2px;color:#8a8a8a">No</div><svg style="left:179.75px;top:405.40px" width="4.31" height="2.65" viewBox="0 0 4.31 2.65"><path d="M0.50 0.50L2.15 2.15L3.81 0.50" fill="none" stroke="#8a8a8a" stroke-width=".6"/></svg>
<div class="t" style="left:209.6px;top:403.4px;font-size:4.2px;color:#9a9a9a">None</div>
<svg style="left:235.59px;top:404.56px" width="4.12" height="2.56" viewBox="0 0 4.12 2.56"><path d="M0.50 0.50L2.06 2.06L3.62 0.50" fill="none" stroke="#8a8a8a" stroke-width=".6"/></svg>
<div class="ln" style="left:2.7px;top:409.4px;width:247.6px;background:#1b1b1b"></div>
<!-- time graph -->
<div class="a" style="left:250px;top:381.6px;width:.8px;height:126.4px;background:#161616"></div>
<div class="a" style="left:251.6px;top:383.2px;width:688px;height:3.4px;background:#565656"></div>
<div class="a" style="left:939.6px;top:383.2px;width:48.4px;height:3.4px;background:#3a3a34"></div>
<div class="a" style="left:250.6px;top:383.2px;width:2px;height:3.6px;background:#2f86e8;border-radius:1px 0 0 1px"></div>
<div class="a" style="left:938px;top:383.2px;width:2px;height:3.6px;background:#2f86e8"></div>
<div class="a" style="left:414px;top:384.8px;width:1.4px;height:1.2px;background:#4a7fc0"></div>
<div class="a" style="left:251.6px;top:395.4px;width:739px;height:5.2px;background:#4e4e4e"></div>
<div class="a" style="left:250.6px;top:395.2px;width:2px;height:5.6px;background:#2f86e8;border-radius:1px 0 0 1px"></div>
<div class="a" style="left:251.6px;top:400.2px;width:240px;height:1px;background:#2fae3a"></div>
<div class="a" style="left:907.7px;top:400.2px;width:8.8px;height:1px;background:#2fae3a"></div>
<div class="a" style="left:918.4px;top:400.2px;width:8.8px;height:1px;background:#2fae3a"></div>
<div class="a" style="left:270px;top:400px;width:1px;height:1.2px;background:#2b4fb0"></div>
<div class="a" style="left:296.6px;top:400px;width:1px;height:1.2px;background:#2b4fb0"></div>
<div class="a" style="left:252.6px;top:402.7px;width:738px;height:6.4px;background:#877e3b"></div>
<div class="a" style="left:992px;top:396px;width:3.8px;height:5px;background:#b4b4b4;clip-path:polygon(0 0,100% 0,100% 62%,50% 100%,0 62%)"></div>
<svg style="left:991px;top:403.2px" width="5.4" height="5.6" viewBox="0 0 5.400 5.600"><path d="M2.300.6L.5 2.800l1.800 2.200" fill="none" stroke="#e0e0e0" stroke-width=".6"/><path d="M2.800 2.800l1.300-1.600 1.300 1.600-1.300 1.600z" fill="#d0d0d0"/></svg>

<div class="a" style="left:252.0px;top:392.6px;width:.7px;height:1.8px;background:#8a8a8a"></div>
<div class="t" style="left:251.7px;top:388.1px;font-size:4.5px;color:#a8a8a8">00s</div>
<div class="a" style="left:278.2px;top:392.6px;width:.7px;height:1.8px;background:#8a8a8a"></div>
<div class="t" style="left:275.0px;top:388.1px;font-size:4.5px;color:#a8a8a8">01s</div>
<div class="a" style="left:304.5px;top:392.6px;width:.7px;height:1.8px;background:#8a8a8a"></div>
<div class="t" style="left:301.2px;top:388.1px;font-size:4.5px;color:#a8a8a8">02s</div>
<div class="a" style="left:330.8px;top:392.6px;width:.7px;height:1.8px;background:#8a8a8a"></div>
<div class="t" style="left:327.5px;top:388.1px;font-size:4.5px;color:#a8a8a8">03s</div>
<div class="a" style="left:357.0px;top:392.6px;width:.7px;height:1.8px;background:#8a8a8a"></div>
<div class="t" style="left:353.8px;top:388.1px;font-size:4.5px;color:#a8a8a8">04s</div>
<div class="a" style="left:383.3px;top:392.6px;width:.7px;height:1.8px;background:#8a8a8a"></div>
<div class="t" style="left:380.0px;top:388.1px;font-size:4.5px;color:#a8a8a8">05s</div>
<div class="a" style="left:409.6px;top:392.6px;width:.7px;height:1.8px;background:#8a8a8a"></div>
<div class="t" style="left:406.3px;top:388.1px;font-size:4.5px;color:#a8a8a8">06s</div>
<div class="a" style="left:435.8px;top:392.6px;width:.7px;height:1.8px;background:#8a8a8a"></div>
<div class="t" style="left:432.6px;top:388.1px;font-size:4.5px;color:#a8a8a8">07s</div>
<div class="a" style="left:462.1px;top:392.6px;width:.7px;height:1.8px;background:#8a8a8a"></div>
<div class="t" style="left:458.9px;top:388.1px;font-size:4.5px;color:#a8a8a8">08s</div>
<div class="a" style="left:829.9px;top:392.6px;width:.7px;height:1.8px;background:#8a8a8a"></div>
<div class="t" style="left:826.6px;top:388.1px;font-size:4.5px;color:#a8a8a8">22s</div>
<div class="a" style="left:856.2px;top:392.6px;width:.7px;height:1.8px;background:#8a8a8a"></div>
<div class="t" style="left:852.9px;top:388.1px;font-size:4.5px;color:#a8a8a8">23s</div>
<div class="a" style="left:882.4px;top:392.6px;width:.7px;height:1.8px;background:#8a8a8a"></div>
<div class="t" style="left:879.2px;top:388.1px;font-size:4.5px;color:#a8a8a8">24s</div>
<div class="a" style="left:908.7px;top:392.6px;width:.7px;height:1.8px;background:#8a8a8a"></div>
<div class="t" style="left:905.4px;top:388.1px;font-size:4.5px;color:#a8a8a8">25s</div>
<div class="a" style="left:935.0px;top:392.6px;width:.7px;height:1.8px;background:#8a8a8a"></div>
<div class="t" style="left:931.7px;top:388.1px;font-size:4.5px;color:#a8a8a8">26s</div>
<div class="a" style="left:961.2px;top:392.6px;width:.7px;height:1.8px;background:#8a8a8a"></div>
<div class="t" style="left:958.0px;top:388.1px;font-size:4.5px;color:#a8a8a8">27s</div>
<div class="a" style="left:987.5px;top:392.6px;width:.7px;height:1.8px;background:#8a8a8a"></div>
<div class="t" style="left:982.7px;top:388.1px;font-size:4.5px;color:#a8a8a8">28s</div>
<div class="a" style="left:425.6px;top:392px;width:.9px;height:116px;background:#3a72b6"></div>
<div class="a" style="left:423.6px;top:388.6px;width:5px;height:4.4px;background:#3b8ef0;border-radius:.8px;clip-path:polygon(0 0,100% 0,100% 55%,50% 100%,0 55%)"></div>
<!-- ===== Windows Explorer window ===== -->
<div class="a ex" id="exw" style="left:471px;top:92px;width:338.8px;height:345.3px;background:#fff;border-radius:2.6px 2.6px 0 0;overflow:hidden;box-shadow:0 5px 14px rgba(0,0,0,.42),0 1px 3px rgba(0,0,0,.3)"></div>
<div class="a" style="left:471px;top:92px;width:338.8px;height:14.6px;background:#cfe0ef;border-radius:2.6px 2.6px 0 0"></div>
<div class="a" style="left:473px;top:95px;width:94px;height:11.6px;background:#f3f6fb;border-radius:2.4px 2.4px 0 0"></div>
<div class="a" style="left:471px;top:106.6px;width:338.8px;height:21.4px;background:#f3f6fb"></div>
<div class="a" style="left:471px;top:128px;width:338.8px;height:.7px;background:#dfe3e8"></div>
<div class="a" style="left:471px;top:128.7px;width:338.8px;height:298px;background:#fff"></div>
<div class="a" style="left:471px;top:148.4px;width:61px;height:278.4px;background:#fefefe"></div><div class="a" style="left:532px;top:148.4px;width:.8px;height:278.4px;background:#f1f1f2"></div>
<div class="a" style="left:471px;top:426.8px;width:338.8px;height:10.5px;background:#fff"></div>
<!-- tab -->
<div class="a" style="left:477px;top:98.90px;width:6.4px;height:4.10px;background:linear-gradient(#f9d463,#f3c344);border-radius:.6px"></div><div class="a" style="left:477px;top:97.6px;width:2.8px;height:1.4px;background:#e0a820;border-radius:.5px .5px 0 0"></div>
<div class="t" style="left:487.5px;top:97.6px;font-size:5px;color:#1b1b1b">stills</div>
<div class="t" style="left:556.5px;top:96.6px;font-size:6.4px;color:#333">×</div>
<div class="t" style="left:575px;top:97px;font-size:5.6px;color:#a9bccb">+</div>
<div class="a" style="left:763.7px;top:96.8px;width:4.4px;height:.8px;background:#222"></div>
<div class="a" style="left:780.8px;top:95.2px;width:4.2px;height:4.2px;border:.55px solid #333;border-radius:.9px;box-sizing:border-box"></div>
<div class="t" style="left:797.6px;top:93px;font-size:7.4px;color:#222">×</div>
<!-- command bar -->
<svg style="left:471px;top:106.6px" width="339" height="21.4" viewBox="0 0 339 21.4">
 <circle cx="11" cy="10.8" r="2.7" fill="none" stroke="#444" stroke-width=".6"/><path d="M9.600 10.800h2.800M11 9.400v2.800" stroke="#444" stroke-width=".5"/>
 <path d="M38.200 4v14M152.500 4v14" stroke="#d3d8de" stroke-width=".6"/>
 <g fill="none" stroke-width=".7">
  <path d="M47.200 8l3.400 4.600M51.200 8l-3.400 4.600" stroke="#444"/><circle cx="47.200" cy="13.400" r="1" stroke="#2b7bd6"/><circle cx="51.200" cy="13.400" r="1" stroke="#2b7bd6"/>
  <rect x="66.200" y="8.400" width="3.600" height="4.400" stroke="#a9cbea" stroke-dasharray=".9 .6"/>
  <path d="M84.400 8.600h3l1.200 1.200V14h-4.200z" stroke="#c4cad2"/>
  <rect x="102.400" y="8.200" width="3.600" height="5.600" rx=".6" stroke="#555"/><path d="M104.200 9.800v2.400" stroke="#2b7bd6"/><path d="M106.800 8.600q1.400 1.600 0 5" stroke="#2b7bd6"/>
  <path d="M123 9l2.600 4.400M125.600 9l-2.600 4.400" stroke="#2b7bd6"/><path d="M122 8.200h4.600" stroke="#555"/>
  <rect x="140" y="9.200" width="4.600" height="4.600" rx=".6" stroke="#555"/><path d="M139.600 8h5.400" stroke="#555"/><path d="M141.400 10.600v2h1.800" stroke="#555" stroke-width=".5"/>
  <path d="M160.600 8.200v5.600M159.400 9.400l1.200-1.200 1.200 1.200M163.200 8.200v5.600M162 12.600l1.200 1.200 1.200-1.200" stroke="#333" stroke-width=".6"/>
  <rect x="194.400" y="8.600" width="3.800" height="4.200" rx=".6" stroke="#555"/>
  <rect x="232.400" y="8.800" width="5" height="3.800" rx=".5" stroke="#555"/><rect x="230.600" y="7.600" width="3" height="2.600" fill="#2b7bd6" stroke="none"/><path d="M234 13.600h3.600" stroke="#555"/>
 </g>
 <g fill="#666"><circle cx="292.600" cy="11" r=".5"/><circle cx="295" cy="11" r=".5"/><circle cx="297.400" cy="11" r=".5"/></g>
</svg>
<div class="t" style="left:489px;top:115.7px;font-size:4.600px;color:#2a2a2a">New</div>
<svg style="left:499.36px;top:116.20px" width="3.69" height="2.34" viewBox="0 0 3.69 2.34"><path d="M0.50 0.50L1.84 1.84L3.19 0.50" fill="none" stroke="#9a9a9a" stroke-width=".6"/></svg>
<div class="t" style="left:638.700px;top:115.7px;font-size:4.600px;color:#2a2a2a">Sort</div>
<svg style="left:649.96px;top:116.20px" width="3.69" height="2.34" viewBox="0 0 3.69 2.34"><path d="M0.50 0.50L1.84 1.84L3.19 0.50" fill="none" stroke="#9a9a9a" stroke-width=".6"/></svg>
<div class="t" style="left:674.300px;top:115.7px;font-size:4.600px;color:#2a2a2a">View</div>
<svg style="left:684.96px;top:116.20px" width="3.69" height="2.34" viewBox="0 0 3.69 2.34"><path d="M0.50 0.50L1.84 1.84L3.19 0.50" fill="none" stroke="#9a9a9a" stroke-width=".6"/></svg>
<div class="t" style="left:711.900px;top:115.7px;font-size:4.700px;color:#2a2a2a;letter-spacing:0">Set as background</div>
<!-- address row -->
<svg style="left:476.40px;top:136.60px" width="4.4" height="5" viewBox="0 0 4.4 5"><path d="M4.200 2.500H.5M2.200.6L.4 2.500l1.800 1.900" fill="none" stroke="#9a9a9a" stroke-width=".6"/></svg>
<svg style="left:489.80px;top:136.60px" width="4.4" height="5" viewBox="0 0 4.4 5"><path d="M.2 2.500h3.700M2.200.6L4 2.500 2.200 4.400" fill="none" stroke="#c4c4c4" stroke-width=".6"/></svg>
<svg style="left:501.87px;top:138.50px" width="4.25" height="2.63" viewBox="0 0 4.25 2.63"><path d="M0.50 0.50L2.13 2.13L3.75 0.50" fill="none" stroke="#777" stroke-width=".6"/></svg>
<svg style="left:513.20px;top:136.40px" width="5" height="5.4" viewBox="0 0 5 5.4"><path d="M2.500 5.200V.6M.6 2.400L2.500.5l1.900 1.900" fill="none" stroke="#666" stroke-width=".6"/></svg>
<div class="a" style="left:524.200px;top:132.200px;width:120.600px;height:13.400px;border:.6px solid #d9dde2;border-radius:1.200px;background:#fff;box-sizing:border-box"></div>
<div class="a" style="left:527.600px;top:137.00px;width:6.400px;height:4.10px;background:linear-gradient(#f9d463,#f3c344);border-radius:.6px"></div><div class="a" style="left:527.600px;top:135.700px;width:2.800px;height:1.400px;background:#e0a820;border-radius:.5px .5px 0 0"></div>
<svg style="left:535.59px;top:137.19px" width="2.51" height="4.01" viewBox="0 0 2.51 4.01"><path d="M2.01 0.50L0.50 2.01L2.01 3.51" fill="none" stroke="#666" stroke-width=".6"/></svg><svg style="left:537.39px;top:137.19px" width="2.51" height="4.01" viewBox="0 0 2.51 4.01"><path d="M2.01 0.50L0.50 2.01L2.01 3.51" fill="none" stroke="#666" stroke-width=".6"/></svg>
<div class="t" style="left:542.300px;top:136.900px;font-size:4.900px;color:#1f1f1f;letter-spacing:-.02px">Wedding Save The...</div>
<svg style="left:587.86px;top:136.86px" width="2.89" height="4.78" viewBox="0 0 2.89 4.78"><path d="M0.50 0.50L2.39 2.39L0.50 4.28" fill="none" stroke="#666" stroke-width=".6"/></svg>
<div class="t" style="left:593.500px;top:136.900px;font-size:4.900px;color:#1f1f1f">Stills</div>
<svg style="left:622.44px;top:138.25px" width="3.83" height="2.41" viewBox="0 0 3.83 2.41"><path d="M0.50 0.50L1.91 1.91L3.33 0.50" fill="none" stroke="#a0a0a0" stroke-width=".6"/></svg>
<svg style="left:634.80px;top:136.40px" width="5.4" height="5.4" viewBox="0 0 5.4 5.4"><path d="M4.700 2.700A2 2 0 1 1 3.600.9" fill="none" stroke="#666" stroke-width=".6"/><path d="M3.200.1h1.500v1.500" fill="none" stroke="#666" stroke-width=".6"/></svg>
<div class="a" style="left:649.400px;top:132.200px;width:155.800px;height:13.400px;border:.6px solid #d9dde2;border-radius:1.200px;background:#fff;box-sizing:border-box"></div>
<svg style="left:655.00px;top:136.60px" width="7.4" height="4.6" viewBox="0 0 8 5"><circle cx="2.8" cy="2" r="1.5" fill="none" stroke="#8a8a8a" stroke-width=".7"/><path d="M1.7 3.100L.4 4.600" stroke="#8a8a8a" stroke-width=".8"/></svg>
<div class="t" style="left:665.600px;top:136.900px;font-size:4.500px;color:#6a6a6a">Search Stills</div>
<!-- nav pane -->
<svg style="left:484.0px;top:152.98px" width="7" height="6" viewBox="0 0 7 6"><path d="M.4 3L3.5.4 6.6 3" fill="none" stroke="#d8642a" stroke-width=".9"/><path d="M1.4 3v2.8h1.6V4h1v1.8h1.6V3" fill="#e8a766"/></svg>
<div class="nv" style="left:492.4px;top:153.08px;margin-top:-0.78px;max-width:39.4px;color:#2e2e2e">Home</div>
<svg style="left:476.25px;top:165.17px" width="2.73" height="4.46" viewBox="0 0 2.73 4.46"><path d="M0.50 0.50L2.23 2.23L0.50 3.96" fill="none" stroke="#8c8c8c" stroke-width=".6"/></svg>
<svg style="left:484.0px;top:166.06px" width="7" height="5" viewBox="0 0 7 5"><path d="M1.6 4.6a1.5 1.5 0 0 1 .2-3A2.1 2.1 0 0 1 5.6 2a1.35 1.35 0 0 1 0 2.6z" fill="#1f6fd6"/></svg>
<div class="nv" style="left:492.4px;top:165.55px;margin-top:-0.78px;max-width:39.4px;color:#2e2e2e">OneDrive - Persona</div>
<div class="a" style="left:476px;top:181.64px;width:52.4px;height:.6px;background:#dcdfe3"></div>
<div class="ni" style="left:484.6px;top:190.70px;background:#2a9fd8"></div>
<div class="nv" style="left:492.4px;top:190.39px;margin-top:-0.78px;max-width:39.4px;color:#2e2e2e">Desktop</div>
<svg style="left:526.4px;top:191.50px" width="4" height="4" viewBox="0 0 4 4"><path d="M2.2.3l1.5 1.5-.9.3-.8.8-.2 1-.7-.7-1 1 .9-1.1-.6-.6 1-.2.8-.8z" fill="#9c9c9c"/></svg>
<svg style="left:484.4px;top:202.96px" width="6" height="6" viewBox="0 0 6 6"><path d="M3 .4v3.6M1.4 2.6L3 4.2l1.6-1.6" fill="none" stroke="#1f9a5a" stroke-width=".9"/><path d="M.8 5.4h4.4" stroke="#1f9a5a" stroke-width=".8"/></svg>
<div class="nv" style="left:492.4px;top:202.86px;margin-top:-0.78px;max-width:39.4px;color:#2e2e2e">Downloads</div>
<svg style="left:526.4px;top:203.97px" width="4" height="4" viewBox="0 0 4 4"><path d="M2.2.3l1.5 1.5-.9.3-.8.8-.2 1-.7-.7-1 1 .9-1.1-.6-.6 1-.2.8-.8z" fill="#9c9c9c"/></svg>
<div class="ni" style="left:485.3px;top:215.1px;background:#7aa0c8;width:4.6px;height:5.8px;background:linear-gradient(#a9c4e0,#7aa0c8)"></div>
<div class="nv" style="left:492.4px;top:215.23px;margin-top:-0.78px;max-width:39.4px;color:#2e2e2e">Documents</div>
<svg style="left:526.4px;top:216.34px" width="4" height="4" viewBox="0 0 4 4"><path d="M2.2.3l1.5 1.5-.9.3-.8.8-.2 1-.7-.7-1 1 .9-1.1-.6-.6 1-.2.8-.8z" fill="#9c9c9c"/></svg>
<div class="ni" style="left:484.6px;top:228.01px;background:#2f8de0"></div>
<div class="nv" style="left:492.4px;top:227.70px;margin-top:-0.78px;max-width:39.4px;color:#2e2e2e">Pictures</div>
<svg style="left:526.4px;top:228.81px" width="4" height="4" viewBox="0 0 4 4"><path d="M2.2.3l1.5 1.5-.9.3-.8.8-.2 1-.7-.7-1 1 .9-1.1-.6-.6 1-.2.8-.8z" fill="#9c9c9c"/></svg>
<div class="ni" style="left:484.6px;top:240.48px;background:#e0533c;border-radius:50%;width:5.4px;height:5.4px"></div>
<div class="nv" style="left:492.4px;top:240.17px;margin-top:-0.78px;max-width:39.4px;color:#2e2e2e">Music</div>
<svg style="left:526.4px;top:241.28px" width="4" height="4" viewBox="0 0 4 4"><path d="M2.2.3l1.5 1.5-.9.3-.8.8-.2 1-.7-.7-1 1 .9-1.1-.6-.6 1-.2.8-.8z" fill="#9c9c9c"/></svg>
<div class="a" style="left:484.4px;top:254.05px;width:6.2px;height:3.90px;background:linear-gradient(#f9d463,#f3c344);border-radius:.6px"></div><div class="a" style="left:484.4px;top:252.74px;width:2.8px;height:1.4px;background:#e0a820;border-radius:.5px .5px 0 0"></div>
<div class="nv" style="left:492.4px;top:252.64px;margin-top:-0.78px;max-width:39.4px;color:#2e2e2e">Localization Proj</div>
<svg style="left:526.4px;top:253.75px" width="4" height="4" viewBox="0 0 4 4"><path d="M2.2.3l1.5 1.5-.9.3-.8.8-.2 1-.7-.7-1 1 .9-1.1-.6-.6 1-.2.8-.8z" fill="#9c9c9c"/></svg>
<div class="ni" style="left:484.6px;top:265.32px;background:#7b35c9"></div>
<div class="nv" style="left:492.4px;top:265.01px;margin-top:-0.78px;max-width:39.4px;color:#2e2e2e">Videos</div>
<svg style="left:526.4px;top:266.12px" width="4" height="4" viewBox="0 0 4 4"><path d="M2.2.3l1.5 1.5-.9.3-.8.8-.2 1-.7-.7-1 1 .9-1.1-.6-.6 1-.2.8-.8z" fill="#9c9c9c"/></svg>
<div class="a" style="left:484.4px;top:278.89px;width:6.2px;height:3.90px;background:linear-gradient(#f9d463,#f3c344);border-radius:.6px"></div><div class="a" style="left:484.4px;top:277.58px;width:2.8px;height:1.4px;background:#e0a820;border-radius:.5px .5px 0 0"></div>
<div class="nv" style="left:492.4px;top:277.48px;margin-top:-0.78px;max-width:39.4px;color:#2e2e2e">Screenshots</div>
<div class="a" style="left:484.4px;top:291.36px;width:6.2px;height:3.90px;background:linear-gradient(#f9d463,#f3c344);border-radius:.6px"></div><div class="a" style="left:484.4px;top:290.05px;width:2.8px;height:1.4px;background:#e0a820;border-radius:.5px .5px 0 0"></div>
<div class="nv" style="left:492.4px;top:289.95px;margin-top:-0.78px;max-width:39.4px;color:#2e2e2e">SHORTS</div>
<div class="a" style="left:484.4px;top:303.73px;width:6.2px;height:3.90px;background:linear-gradient(#f9d463,#f3c344);border-radius:.6px"></div><div class="a" style="left:484.4px;top:302.42px;width:2.8px;height:1.4px;background:#e0a820;border-radius:.5px .5px 0 0"></div>
<div class="nv" style="left:492.4px;top:302.32px;margin-top:-0.78px;max-width:39.4px;color:#2e2e2e">Genie To MAD</div>
<div class="a" style="left:484.4px;top:316.20px;width:6.2px;height:3.90px;background:linear-gradient(#f9d463,#f3c344);border-radius:.6px"></div><div class="a" style="left:484.4px;top:314.89px;width:2.8px;height:1.4px;background:#e0a820;border-radius:.5px .5px 0 0"></div>
<div class="nv" style="left:492.4px;top:314.79px;margin-top:-0.78px;max-width:39.4px;color:#2e2e2e">Wedding Save The</div>
<div class="a" style="left:476px;top:330.98px;width:52.4px;height:.6px;background:#dcdfe3"></div>
<svg style="left:476.25px;top:339.15px" width="2.73" height="4.46" viewBox="0 0 2.73 4.46"><path d="M0.50 0.50L2.23 2.23L0.50 3.96" fill="none" stroke="#8c8c8c" stroke-width=".6"/></svg>
<div class="a" style="left:484.4px;top:340.64px;width:6.2px;height:3.90px;background:linear-gradient(#f9d463,#f3c344);border-radius:.6px"></div><div class="a" style="left:485.0px;top:342.35px;width:3.4px;height:2.8px;background:#d8321f;border-radius:.8px"></div>
<div class="nv" style="left:492.4px;top:339.63px;margin-top:-0.78px;max-width:39.4px;color:#2e2e2e">Creative Cloud File</div>
<svg style="left:474.68px;top:352.50px" width="5.04" height="3.02" viewBox="0 0 5.04 3.02"><path d="M0.50 0.50L2.52 2.52L4.54 0.50" fill="none" stroke="#555" stroke-width=".6"/></svg>
<div class="a" style="left:484.4px;top:352.41px;width:6.6px;height:4.4px;background:#2b9fe0;border-radius:.5px"></div><div class="a" style="left:486.2px;top:357.23px;width:3px;height:.8px;background:#3a7fb4"></div>
<div class="nv" style="left:492.4px;top:352.10px;margin-top:-0.78px;max-width:39.4px;color:#2e2e2e">This PC</div>
<svg style="left:479.45px;top:364.19px" width="2.73" height="4.46" viewBox="0 0 2.73 4.46"><path d="M0.50 0.50L2.23 2.23L0.50 3.96" fill="none" stroke="#8c8c8c" stroke-width=".6"/></svg>
<div class="a" style="left:487.6px;top:367.89px;width:6px;height:1.4px;background:#4a4a4a;border-radius:.4px"></div><div class="a" style="left:489.0px;top:364.88px;width:3px;height:2.4px;background:#2b8be0"></div>
<div class="nv" style="left:495.6px;top:364.57px;margin-top:-0.78px;max-width:36px;color:#2e2e2e">Local Disk (C:)</div>
<svg style="left:479.45px;top:376.66px" width="2.73" height="4.46" viewBox="0 0 2.73 4.46"><path d="M0.50 0.50L2.23 2.23L0.50 3.96" fill="none" stroke="#8c8c8c" stroke-width=".6"/></svg>
<div class="a" style="left:487.6px;top:379.36px;width:6px;height:1.6px;background:#3a3a3a;border-radius:.4px"></div>
<div class="nv" style="left:495.6px;top:377.04px;margin-top:-0.78px;max-width:36px;color:#2e2e2e">Sandisk SSD (D:)</div>
<div class="a" style="left:471px;top:385.99px;width:61px;height:12.6px;background:#dcdcdc"></div>
<svg style="left:479.45px;top:389.03px" width="2.73" height="4.46" viewBox="0 0 2.73 4.46"><path d="M0.50 0.50L2.23 2.23L0.50 3.96" fill="none" stroke="#8c8c8c" stroke-width=".6"/></svg>
<div class="a" style="left:487.6px;top:391.73px;width:6px;height:1.6px;background:#3a3a3a;border-radius:.4px"></div>
<div class="nv" style="left:495.6px;top:389.41px;margin-top:-0.78px;max-width:36px;color:#2e2e2e">VIDEO PROJECTS</div>
<svg style="left:479.45px;top:401.50px" width="2.73" height="4.46" viewBox="0 0 2.73 4.46"><path d="M0.50 0.50L2.23 2.23L0.50 3.96" fill="none" stroke="#8c8c8c" stroke-width=".6"/></svg>
<div class="a" style="left:487.6px;top:404.20px;width:6px;height:1.6px;background:#3a3a3a;border-radius:.4px"></div>
<div class="nv" style="left:495.6px;top:401.88px;margin-top:-0.78px;max-width:36px;color:#2e2e2e">Ninja SSD (G:)</div>
<svg style="left:476.25px;top:413.97px" width="2.73" height="4.46" viewBox="0 0 2.73 4.46"><path d="M0.50 0.50L2.23 2.23L0.50 3.96" fill="none" stroke="#8c8c8c" stroke-width=".6"/></svg>
<div class="a" style="left:486.0px;top:414.45px;width:4.6px;height:4px;background:#2b9fe0;border-radius:.5px"></div><div class="a" style="left:484.4px;top:416.47px;width:3.4px;height:3.2px;background:#5a6f80;border-radius:.5px"></div>
<div class="nv" style="left:492.4px;top:414.35px;margin-top:-0.78px;max-width:39.4px;color:#2e2e2e">Network</div>
<!-- file tiles -->
<div class="tile" style="left:538.3px;top:151.8px;height:51.0px;box-shadow:inset 0 .8px 0 #a9c6e2">
<svg class="th" style="left:2.8px;top:13.4px" width="35.6" height="23.7" viewBox="0 0 36 24" preserveAspectRatio="none"><defs><linearGradient id="g0" x1="0" y1="0" x2="0" y2="1"><stop offset="0" stop-color="#dfeef3"/><stop offset="0.4" stop-color="#b9dcea"/><stop offset="0.55" stop-color="#5fb0d4"/><stop offset="1" stop-color="#1f86c0"/></linearGradient></defs><rect width="36" height="24" fill="url(#g0)"/><path d="M0 8.500q6-1.500 12-.5t10 1.500 14-.5v3H0z" fill="#8fa89a"/><path d="M9 11q6-2 14 0l13 2v11H12z" fill="#2a8fc6"/><path d="M13 15q8-2 16 1l-4 6-10 1z" fill="#1878b4"/><path d="M0 8q4 0 6 3t4 5 2 4l-1 4H0z" fill="#8a6a4c"/><path d="M0 11q3 1 4 4t3 4v5H0z" fill="#a8543a"/><path d="M0 20q6-2 12 1l6 3H0z" fill="#3a4a30"/><path d="M28 9l8-1v5l-6-1z" fill="#6f8f7a"/></svg>
<div class="cap" style="top:38.8px">Beautiful-seasca<br>pe-765467</div></div>
<div class="tile" style="left:583.4px;top:151.8px;height:56.6px">
<svg class="th" style="left:2.8px;top:13.4px" width="35.6" height="23.7" viewBox="0 0 36 24" preserveAspectRatio="none"><defs><linearGradient id="g1" x1="0" y1="0" x2="0" y2="1"><stop offset="0" stop-color="#4a3f80"/><stop offset="0.25" stop-color="#3f3474"/><stop offset="0.42" stop-color="#9a5a9c"/><stop offset="0.54" stop-color="#dc78a8"/><stop offset="0.68" stop-color="#d078a8"/><stop offset="0.85" stop-color="#6a4a8a"/><stop offset="1" stop-color="#2a2a5c"/></linearGradient></defs><rect width="36" height="24" fill="url(#g1)"/><path d="M1 8q3-3.500 8-3t8-.500 7 1.500 6 .5 5 2l-5 2.500q-6-1-11 0t-10-.500z" fill="#272450"/><path d="M0 13q3 2 5 5t6 4.500 8 .500 10-3 7-7v11H0z" fill="#1f2a5e"/><path d="M11 18q7 3 15-1l-2 4-10 .5z" fill="#7a5a9c"/><path d="M16.600 9.500q1-1.400 2 0l.300 4-.300 6.500h-1.700l-.400-6.500zM20.200 10.400q1-1.400 2 0l.300 3.600-.400 6h-1.600l-.400-6z" fill="#151238"/></svg>
<div class="cap" style="top:38.8px">Couple-holding-<br>hands-at-sunset-<br>1009559</div></div>
<div class="tile" style="left:628.6px;top:151.8px;height:56.6px">
<svg class="th" style="left:2.8px;top:17.8px" width="35.6" height="19.3" viewBox="0 0 36 20" preserveAspectRatio="none"><defs><linearGradient id="g2" x1="0" y1="0" x2="0" y2="1"><stop offset="0" stop-color="#e4dccb"/><stop offset="0.35" stop-color="#cfd0cc"/><stop offset="0.45" stop-color="#6f97c0"/><stop offset="0.62" stop-color="#5a84b0"/><stop offset="0.7" stop-color="#b0a684"/><stop offset="1" stop-color="#8f8a6c"/></linearGradient></defs><rect width="36" height="20" fill="url(#g2)"/><rect x="24" width="12" height="9" fill="#c4d4e2" opacity=".8"/><path d="M26 10h1v10h-1zM29 10h1v10h-1zM32 10h1v10h-1zM34.500 10h1v10h-1z" fill="#5a7a9c"/><path d="M9 20V12q1-4 5-4.500l3 1 2-1q5 1 6 6v6.500z" fill="#b8c8dc"/><path d="M16 9l3-1q5 1 6 6v6h-7z" fill="#dcdcd6"/><circle cx="14" cy="5" r="3.200" fill="#4a3428"/><path d="M16 2.500q3.500-2 5.500 1.500t-.5 5.500-4-.500z" fill="#d8b48a"/><path d="M18 2q3-1 4.500 2l-1 1q-2-2-4-1z" fill="#e8d4a8"/></svg>
<div class="cap" style="top:38.8px">Couple-hug-on-t<br>he-beach-110710<br>2</div></div>
<div class="tile" style="left:673.7px;top:151.8px;height:51.0px">
<svg class="th" style="left:2.8px;top:13.4px" width="35.6" height="23.7" viewBox="0 0 36 24" preserveAspectRatio="none"><defs><linearGradient id="g3" x1="0" y1="0" x2="0" y2="1"><stop offset="0" stop-color="#fbf6ea"/><stop offset="0.3" stop-color="#f6e6c4"/><stop offset="0.42" stop-color="#e8c890"/><stop offset="0.5" stop-color="#8a9ab0"/><stop offset="0.7" stop-color="#3a6aa0"/><stop offset="1" stop-color="#24487c"/></linearGradient></defs><rect width="36" height="24" fill="url(#g3)"/><path d="M0 9l10-.500 8 1 6-.5v1.500H0z" fill="#4a4a4a"/><path d="M27 10V5l1.500-3 1 2 2-1 2 2 2.500-.5V14h-7z" fill="#2a2418"/><circle cx="30" cy="2.800" r="1" fill="#3a3020"/><path d="M9.500 24V13q.3-2.800 2.300-2.800t2.200 2.200q.4-1.800 2-1.800t2 2.400V24z" fill="#1f3c60"/><circle cx="11.800" cy="9" r="1.500" fill="#1a2c48"/><circle cx="16" cy="9.600" r="1.400" fill="#1a2c48"/></svg>
<div class="cap" style="top:38.8px">Couple-in-lake-8<br>86580</div></div>
<div class="tile" style="left:718.8px;top:151.8px;height:56.6px">
<svg class="th" style="left:2.8px;top:17.8px" width="35.6" height="19.3" viewBox="0 0 36 20" preserveAspectRatio="none"><defs><linearGradient id="g4" x1="0" y1="0" x2="0" y2="1"><stop offset="0" stop-color="#e0d2b4"/><stop offset="0.5" stop-color="#c8b48e"/><stop offset="1" stop-color="#9a8260"/></linearGradient></defs><rect width="36" height="20" fill="url(#g4)"/><rect x="22" width="14" height="12" fill="#efe4c8" opacity=".8"/><path d="M4 20v-7q1-4 6-5l3 2 4-1q2-3 6-2.500t6 4.500l2 9z" fill="#48689c"/><path d="M16 9l4 .5 1 5-3 3-3-4z" fill="#d8b49a"/><path d="M7 3q4-3.500 7 0t1 6-5 2.500T7 9z" fill="#8c4a38"/><circle cx="12.600" cy="6.800" r="2" fill="#d0a080"/><path d="M16.500 1.500q4-2.500 7 .5t0 7-6 1.500z" fill="#2a1f1a"/><path d="M18 5q2-1 4 0l-.5 4-3 .5z" fill="#c09070"/></svg>
<div class="cap" style="top:38.8px">Couple-making-<br>heart-with-hands<br>-1107220</div></div>
<div class="tile" style="left:763.9px;top:151.8px;height:51.0px">
<svg class="th" style="left:2.8px;top:17.8px" width="35.6" height="19.3" viewBox="0 0 36 20" preserveAspectRatio="none"><defs><linearGradient id="g5" x1="0" y1="0" x2="0" y2="1"><stop offset="0" stop-color="#f6ecd0"/><stop offset="0.35" stop-color="#f0dca4"/><stop offset="0.5" stop-color="#d8a850"/><stop offset="0.56" stop-color="#6a5a28"/><stop offset="0.8" stop-color="#4a4420"/><stop offset="1" stop-color="#3a3a1c"/></linearGradient></defs><rect width="36" height="20" fill="url(#g5)"/><path d="M0 10q10-1.500 20-.5t16-1v2H0z" fill="#8a7434"/><ellipse cx="20" cy="6" rx="8" ry="5" fill="#fff8e0" opacity=".55"/><path d="M14.800 4.500q.8-1.600 1.600 0l.500 3.500-.600 5h-1.200l-.700-5zM21.400 4q.8-1.600 1.600 0l.700 3.600-.700 5h-1.400l-.700-5z" fill="#fbf6ea"/><path d="M16.600 6.500l5-.5" stroke="#fbf6ea" stroke-width=".8"/><circle cx="15.600" cy="3.200" r=".9" fill="#e8d8b0"/><circle cx="22.200" cy="2.800" r=".9" fill="#e8d8b0"/></svg>
<div class="cap" style="top:38.8px">Couple-runs-at-s<br>unset-1107217</div></div>
<div class="tile" style="left:538.3px;top:209.5px;height:56.4px">
<svg class="th" style="left:2.8px;top:12.8px" width="35.6" height="23.7" viewBox="0 0 36 24" preserveAspectRatio="none"><defs><linearGradient id="g6" x1="0" y1="0" x2="0" y2="1"><stop offset="0" stop-color="#f2f4ee"/><stop offset="1" stop-color="#dfe6dc"/></linearGradient></defs><rect width="36" height="24" fill="url(#g6)"/><path d="M0 10h8v14H0z" fill="#c9c4b0"/><path d="M0 14l8 1v2l-8-1z" fill="#a8a08a"/><path d="M10 24V14q2-5 7-5l6 3 5-1q6 1 8 6v7z" fill="#8cc0cc"/><path d="M9 24V13q1-4 5-4l5 3-1 5-3 7z" fill="#f4f4f2"/><path d="M8 3q2-3 6-2t4 5-2 5l-3 6-3-1z" fill="#2c1a14"/><path d="M13 4q3 0 3.500 3T14 11l-2-3z" fill="#e4bca0"/><path d="M21 3q4-3 8 0t2 7-6 3-5-4z" fill="#5a4030"/><path d="M21 6q2-1 4 0l1 4-3 2-2-2z" fill="#dcb090"/><path d="M16 10l9 1.500 1 3-9-.5z" fill="#f0ece6"/><rect x="24.500" y="9.500" width="3" height="4.500" rx=".6" fill="#b8302c"/></svg>
<div class="cap" style="top:38.5px">Handsome-guy-<br>man-doing-selfi<br>es-596770</div></div>
<div class="tile" style="left:583.4px;top:209.5px;height:50.6px">
<svg class="th" style="left:2.8px;top:12.8px" width="35.6" height="23.7" viewBox="0 0 36 24" preserveAspectRatio="none"><defs><linearGradient id="g7" x1="0" y1="0" x2="0" y2="1"><stop offset="0" stop-color="#6aa8e0"/><stop offset="0.5" stop-color="#4f90d0"/><stop offset="1" stop-color="#3a78c0"/></linearGradient></defs><rect width="36" height="24" fill="url(#g7)"/><path d="M0 4q8-2 16 0t20-2v5q-10 2-20 0T0 9z" fill="#8ac0ec" opacity=".6"/><path d="M24 10q6-2 12 0v14H22z" fill="#dfeaf6"/><path d="M0 24V13q3-4 8-4l6 4 2 11z" fill="#e4eef8"/><path d="M5 4q1-4 5-4t5 4-1 6-4 2-4-3z" fill="#e0bca4"/><path d="M5 3q2-3.500 5.500-3t4.500 3q-3-1-5-.5T5 4z" fill="#7a6654"/><path d="M13 24l1-9q2-6 7-6t6 6l1 9z" fill="#eef2f6"/><path d="M14 9q1-4.500 5-4.500T25 9l1 8-3 3-2-6-4-1-2 4z" fill="#a88866"/><path d="M15.500 9.500q2-2 5-1t3 4-2 5-4 .5-2.500-4z" fill="#ecc8ac"/></svg>
<div class="cap" style="top:38.5px">Just-married-406<br>407</div></div>
<div class="tile" style="left:628.6px;top:209.5px;height:50.6px">
<svg class="th" style="left:2.8px;top:12.8px" width="35.6" height="23.7" viewBox="0 0 36 24" preserveAspectRatio="none"><defs><linearGradient id="g8" x1="0" y1="0" x2="1" y2="1"><stop offset="0" stop-color="#2a5690"/><stop offset="0.5" stop-color="#1f4478"/><stop offset="1" stop-color="#183864"/></linearGradient></defs><rect width="36" height="24" fill="url(#g8)"/><path d="M0 24Q2 8 16 2L5 24z" fill="#4a84c4"/><path d="M19 1L5 23.500h27z" fill="#e4ecf4"/><path d="M19 1L8 23.500h3.500L19 6z" fill="#b4c8dc"/><path d="M19 4l9 19.500h-14z" fill="#7a9ab8"/><path d="M16 12q2-2 4 0l1 5 3 1 2 5.500H13l1-6z" fill="#e8eef4"/><circle cx="18" cy="10" r="1.700" fill="#d8b49a"/><circle cx="22" cy="13.500" r="1.500" fill="#c8a488"/><path d="M0 22h36v2H0z" fill="#16305a"/></svg>
<div class="cap" style="top:38.5px">Relaxing-on-yac<br>ht-758448</div></div>
<div class="tile" style="left:673.7px;top:209.5px;height:50.6px">
<svg class="th" style="left:2.8px;top:12.8px" width="35.6" height="23.7" viewBox="0 0 36 24" preserveAspectRatio="none"><defs><linearGradient id="g9" x1="0" y1="0" x2="0" y2="1"><stop offset="0" stop-color="#4a8ee0"/><stop offset="0.3" stop-color="#6aa4e8"/><stop offset="0.52" stop-color="#a8ccf0"/><stop offset="0.56" stop-color="#d4dce0"/><stop offset="0.6" stop-color="#2a68bc"/><stop offset="0.8" stop-color="#1c58ac"/><stop offset="1" stop-color="#174a96"/></linearGradient></defs><rect width="36" height="24" fill="url(#g9)"/><path d="M0 12.400l4-.8 6 .2 5-.4 3 .8v1.600H0z" fill="#dce4e8"/><path d="M0 13.400l18-.2v.8H0z" fill="#9ab0bc"/><path d="M27.600 11.600l.8 2.200h-1.400z" fill="#fff"/></svg>
<div class="cap" style="top:38.5px">Sea-and-rocks-7<br>68671</div></div>
<div class="tile" style="left:718.8px;top:209.5px;height:50.6px">
<svg class="th" style="left:2.8px;top:12.8px" width="35.6" height="23.7" viewBox="0 0 36 24" preserveAspectRatio="none"><defs><linearGradient id="g10" x1="0" y1="0" x2="0" y2="1"><stop offset="0" stop-color="#7ca8bc"/><stop offset="0.4" stop-color="#9cc0cc"/><stop offset="1" stop-color="#6a9a6a"/></linearGradient></defs><rect width="36" height="24" fill="url(#g10)"/><path d="M0 0h9q2 4 0 8t2 8-3 8H0z" fill="#3f8a48"/><path d="M0 0h5q2 5-1 9t0 15H0z" fill="#2a6434"/><path d="M36 0h-8q-2 5 1 9t-2 8 2 7h7z" fill="#4a9450"/><path d="M36 0h-4q-1 6 1 10t-1 14h4z" fill="#2c6a36"/><path d="M0 0h4l2 2-3 1z" fill="#1f4a28"/><path d="M14.500 8.500h6l4.500 15.500H10.500z" fill="#d4d8d4"/><path d="M13.800 12h7.600M13 15h9.200M12.200 18h10.800M11.400 21h12.400" stroke="#9aa49e" stroke-width=".7"/><path d="M16 4.500q1.500-2 3 0l1 4.500h-5z" fill="#34507c"/><circle cx="17.600" cy="3" r="1.300" fill="#5a4030"/><circle cx="26" cy="14.500" r=".8" fill="#e8f0f4"/></svg>
<div class="cap" style="top:38.5px">Summer-city-1406<br>427</div></div>
<div class="a" style="left:564.8px;top:178.8px;width:227.2px;height:109.1px;background:rgba(58,128,214,.41);border-right:1px solid #5a86ae;border-bottom:.8px solid rgba(90,160,230,.75);border-top:.7px solid rgba(200,228,252,.55);box-sizing:border-box"></div>
<svg style="left:561.6px;top:175.6px" width="5" height="8" viewBox="0 0 5 8"><path d="M.5.5v6l1.400-1.300 1 2.200 1-.500-1-2.100h1.900z" fill="#fff" stroke="#333" stroke-width=".4"/></svg>
<div class="t" style="left:476px;top:430.3px;font-size:4.6px;color:#333">11 items</div>
<div class="a" style="left:497.6px;top:429.6px;width:.5px;height:5.4px;background:#c4c4c4"></div>
<div class="t" style="left:502.2px;top:430.3px;font-size:4.6px;color:#333">1 item selected&nbsp; 8.75 MB</div>
<div class="a" style="left:793.2px;top:433.6px;width:4.6px;height:1.2px;background:#2a2a2a"></div>
<div class="a" style="left:800.4px;top:428.8px;width:7px;height:7px;background:#cde4f0;border:.7px solid #7ab4d4;box-sizing:border-box"></div><div class="a" style="left:802.2px;top:430.6px;width:3.4px;height:3.4px;border:.9px solid #222;border-top-color:transparent;box-sizing:border-box"></div>
<div class="a" style="left:471px;top:337px;width:338.8px;height:100.3px;background:linear-gradient(rgba(0,0,0,0) 0,rgba(0,0,0,.06) 40%,rgba(0,0,0,.135) 100%);pointer-events:none"></div>
<!-- overlay badges -->
<div class="a" style="left:958px;top:14.2px;width:20.2px;height:20.2px;border-radius:50%;background:#f1f1f1"></div>
<div class="a" style="left:966.5px;top:18.1px;width:3.2px;height:3.2px;border-radius:50%;background:#1c1c1c"></div><div class="a" style="left:966.5px;top:22.3px;width:3.2px;height:8.2px;background:#1c1c1c"></div>
<div class="a" style="left:946px;top:460px;width:40px;height:40px;border-radius:50%;background:radial-gradient(circle at 8% 44%,#3436a6 0,#4540a8 20%,rgba(104,78,166,.85) 42%,rgba(150,100,160,0) 72%),linear-gradient(165deg,#8c6cb4 0,#a872a4 35%,#c07e9a 65%,#c8929e 100%)"></div>
<div class="t" style="left:953px;top:471.6px;font-size:18px;font-weight:bold;color:#d3cfd1;margin-top:0;letter-spacing:0">Ma</div>
<div class="a" style="left:0;top:0;width:2.1px;height:508px;background:#fdfdfd"></div><div class="a" style="left:2.1px;top:18px;width:.9px;height:490px;background:#0c0c0c"></div>
</body>
</html>
